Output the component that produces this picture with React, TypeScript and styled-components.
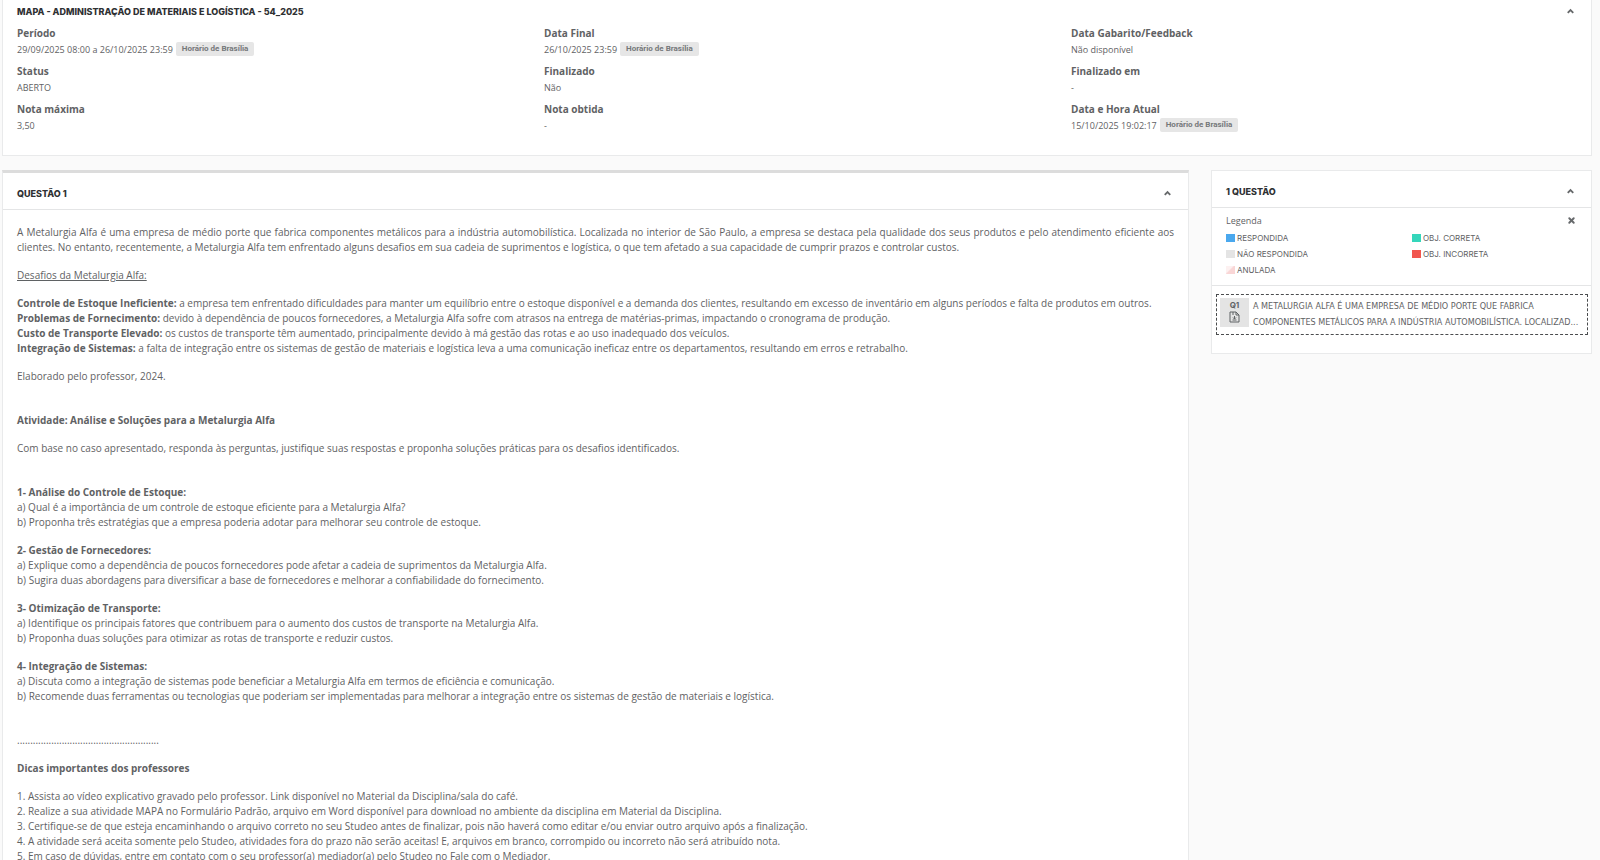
import React from 'react';
import styled, { createGlobalStyle } from 'styled-components';
import { ChevronUp, X } from 'lucide-react';

const GlobalStyle = createGlobalStyle`
  *, *::before, *::after { box-sizing: border-box; }
  body {
    margin: 0;
    background: #fafafa;
    color: #5f6264;
    font-family: 'Open Sans', 'Noto Sans', sans-serif;
    font-size: 10px;
    line-height: 15px;
  }
  h1, h2, p, dl, dd, ul { margin: 0; padding: 0; }
`;

const Page = styled.div`
  display: flex;
  flex-direction: column;
  gap: 14px;
  padding: 0 8px 0 2px;
`;

const Panel = styled.section<{ $accent?: boolean; $flushTop?: boolean }>`
  background: #fff;
  border: 1px solid #e9eaeb;
  border-top: ${p => (p.$flushTop ? '0' : p.$accent ? '3px solid #dcdcdc' : '1px solid #e9eaeb')};
`;

const PanelHeader = styled.header<{ $compact?: boolean }>`
  display: flex;
  align-items: center;
  justify-content: space-between;
  height: ${p => (p.$compact ? '23px' : '36px')};
  padding: ${p => (p.$compact ? '0 15px 0 14px' : '5px 15px 0 14px')};
`;

const Title = styled.h2`
  font: 800 9px/16px Inter, sans-serif;
  color: #2f3133;
`;

const IconButton = styled.button`
  display: flex;
  align-items: center;
  justify-content: center;
  width: 12px;
  height: 12px;
  padding: 0;
  border: 0;
  background: none;
  color: #66696b;
  cursor: pointer;
`;

const Details = styled.dl`
  display: grid;
  grid-template-columns: repeat(3, minmax(0, 1fr));
  row-gap: 6px;
  padding: 2px 7px 22px 0;
`;

const Detail = styled.div`
  padding-left: 14px;
`;

const DetailLabel = styled.dt`
  font-weight: 700;
  line-height: 16px;
`;

const DetailValue = styled.dd`
  display: flex;
  align-items: center;
  gap: 3px;
  height: 16px;
  font-size: 9px;
`;

const Badge = styled.span`
  padding: 0 6px;
  border-radius: 2px;
  background: #e6e6e6;
  color: #75787a;
  font: 700 8px/14px Roboto, sans-serif;
`;

const Columns = styled.main`
  display: grid;
  grid-template-columns: minmax(0, 1187fr) minmax(0, 381fr);
  gap: 22px;
  align-items: start;
`;

const Statement = styled.div`
  display: flex;
  flex-direction: column;
  gap: 13px;
  padding: 15px 14px;
  border-top: 1px solid #e4e5e6;
`;

const Block = styled.div<{ $section?: boolean }>`
  margin-top: ${p => (p.$section ? '16px' : '0')};
`;

const Paragraph = styled.p`
  text-align: justify;
`;

const LegendBox = styled.div`
  padding: 4px 14px 7px;
  border-top: 1px solid #e4e5e6;
  border-bottom: 1px solid #e4e5e6;
`;

const LegendHead = styled.div`
  display: flex;
  align-items: center;
  justify-content: space-between;
  height: 16px;
  margin-bottom: 2px;
  font-size: 9px;
`;

const LegendList = styled.ul`
  display: grid;
  grid-template-columns: 187fr 166fr;
  list-style: none;
  font: 400 8px/16px Inter, sans-serif;
`;

const LegendItem = styled.li`
  display: flex;
  align-items: center;
  gap: 2px;
`;

const Swatch = styled.span<{ $fill: string }>`
  width: 9px;
  height: 8px;
  background: ${p => p.$fill};
`;

const QuestionList = styled.nav`
  padding: 8px 3px 18px 4px;
`;

const QuestionLink = styled.a`
  display: flex;
  gap: 4px;
  padding: 3px 3px 4px;
  border: 1px dashed #4a4c4e;
  color: inherit;
  text-decoration: none;
`;

const QuestionTile = styled.span`
  display: flex;
  flex: none;
  flex-direction: column;
  align-items: center;
  width: 29px;
  height: 29px;
  padding-top: 1px;
  background: #e4e4e4;
  font: 700 8px/12px Inter, sans-serif;
`;

const QuestionText = styled.span`
  flex: 1;
  min-width: 0;
  font: 9px/16px 'DejaVu Sans Condensed', 'DejaVu Sans', sans-serif;
`;

const TextLine = styled.span`
  display: block;
  white-space: nowrap;
`;

const Collapse = ({ label }: { label: string }) => (
  <IconButton type="button" aria-label={label}>
    <ChevronUp size={11} strokeWidth={4} strokeLinecap="butt" strokeLinejoin="miter" />
  </IconButton>
);

const FileIcon = () => (
  <svg width="11" height="12" viewBox="0 0 11 12" fill="none" stroke="currentColor" aria-hidden="true">
    <path d="M1 1H7L10 4V11H1Z" />
    <path d="M4 1V4M7 1V4H10" />
    <path d="M5.5 5V8M4 6.5L5.5 8L7 6.5M3.5 9H7.5" />
  </svg>
);

const details: { label: string; value: string; zone?: boolean }[] = [
  { label: 'Período', value: '29/09/2025 08:00 a 26/10/2025 23:59', zone: true },
  { label: 'Data Final', value: '26/10/2025 23:59', zone: true },
  { label: 'Data Gabarito/Feedback', value: 'Não disponível' },
  { label: 'Status', value: 'ABERTO' },
  { label: 'Finalizado', value: 'Não' },
  { label: 'Finalizado em', value: '-' },
  { label: 'Nota máxima', value: '3,50' },
  { label: 'Nota obtida', value: '-' },
  { label: 'Data e Hora Atual', value: '15/10/2025 19:02:17', zone: true },
];

const challenges = [
  ['Controle de Estoque Ineficiente:', 'a empresa tem enfrentado dificuldades para manter um equilíbrio entre o estoque disponível e a demanda dos clientes, resultando em excesso de inventário em alguns períodos e falta de produtos em outros.'],
  ['Problemas de Fornecimento:', 'devido à dependência de poucos fornecedores, a Metalurgia Alfa sofre com atrasos na entrega de matérias-primas, impactando o cronograma de produção.'],
  ['Custo de Transporte Elevado:', 'os custos de transporte têm aumentado, principalmente devido à má gestão das rotas e ao uso inadequado dos veículos.'],
  ['Integração de Sistemas:', 'a falta de integração entre os sistemas de gestão de materiais e logística leva a uma comunicação ineficaz entre os departamentos, resultando em erros e retrabalho.'],
];

const tasks = [
  ['1- Análise do Controle de Estoque:', 'a) Qual é a importância de um controle de estoque eficiente para a Metalurgia Alfa?', 'b) Proponha três estratégias que a empresa poderia adotar para melhorar seu controle de estoque.'],
  ['2- Gestão de Fornecedores:', 'a) Explique como a dependência de poucos fornecedores pode afetar a cadeia de suprimentos da Metalurgia Alfa.', 'b) Sugira duas abordagens para diversificar a base de fornecedores e melhorar a confiabilidade do fornecimento.'],
  ['3- Otimização de Transporte:', 'a) Identifique os principais fatores que contribuem para o aumento dos custos de transporte na Metalurgia Alfa.', 'b) Proponha duas soluções para otimizar as rotas de transporte e reduzir custos.'],
  ['4- Integração de Sistemas:', 'a) Discuta como a integração de sistemas pode beneficiar a Metalurgia Alfa em termos de eficiência e comunicação.', 'b) Recomende duas ferramentas ou tecnologias que poderiam ser implementadas para melhorar a integração entre os sistemas de gestão de materiais e logística.'],
];

const tips = [
  '1. Assista ao vídeo explicativo gravado pelo professor. Link disponível no Material da Disciplina/sala do café.',
  '2. Realize a sua atividade MAPA no Formulário Padrão, arquivo em Word disponível para download no ambiente da disciplina em Material da Disciplina.',
  '3. Certifique-se de que esteja encaminhando o arquivo correto no seu Studeo antes de finalizar, pois não haverá como editar e/ou enviar outro arquivo após a finalização.',
  '4. A atividade será aceita somente pelo Studeo, atividades fora do prazo não serão aceitas! E, arquivos em branco, corrompido ou incorreto não será atribuído nota.',
  '5. Em caso de dúvidas, entre em contato com o seu professor(a) mediador(a) pelo Studeo no Fale com o Mediador.',
];

const legend = [
  { label: 'RESPONDIDA', fill: '#4aa8ee' },
  { label: 'OBJ. CORRETA', fill: '#35d6bb' },
  { label: 'NÃO RESPONDIDA', fill: '#e4e4e4' },
  { label: 'OBJ. INCORRETA', fill: '#f1564f' },
  { label: 'ANULADA', fill: 'linear-gradient(135deg, #fdf1f1 40%, #f9d6d6 50%)' },
];

export default function App() {
  return (
    <>
      <GlobalStyle />
      <Page>
        <Panel $flushTop>
          <PanelHeader $compact>
            <Title as="h1">MAPA - ADMINISTRAÇÃO DE MATERIAIS E LOGÍSTICA - 54_2025</Title>
            <Collapse label="Recolher detalhes" />
          </PanelHeader>
          <Details>
            {details.map(d => (
              <Detail key={d.label}>
                <DetailLabel>{d.label}</DetailLabel>
                <DetailValue>
                  {d.value}
                  {d.zone && <Badge>Horário de Brasília</Badge>}
                </DetailValue>
              </Detail>
            ))}
          </Details>
        </Panel>

        <Columns>
          <Panel $accent id="q1">
            <PanelHeader>
              <Title>QUESTÃO 1</Title>
              <Collapse label="Recolher questão" />
            </PanelHeader>
            <Statement>
              <Paragraph>
                A Metalurgia Alfa é uma empresa de médio porte que fabrica componentes metálicos para a indústria
                automobilística. Localizada no interior de São Paulo, a empresa se destaca pela qualidade dos seus
                produtos e pelo atendimento eficiente aos clientes. No entanto, recentemente, a Metalurgia Alfa tem
                enfrentado alguns desafios em sua cadeia de suprimentos e logística, o que tem afetado a sua capacidade
                de cumprir prazos e controlar custos.
              </Paragraph>
              <p><u>Desafios da Metalurgia Alfa:</u></p>
              <Block>
                {challenges.map(([name, text]) => (
                  <p key={name}><strong>{name}</strong> {text}</p>
                ))}
              </Block>
              <p>Elaborado pelo professor, 2024.</p>
              <Block $section>
                <strong>Atividade: Análise e Soluções para a Metalurgia Alfa</strong>
              </Block>
              <p>Com base no caso apresentado, responda às perguntas, justifique suas respostas e proponha soluções práticas para os desafios identificados.</p>
              {tasks.map(([name, ...items], i) => (
                <Block key={name} $section={i === 0}>
                  <strong>{name}</strong>
                  {items.map(item => <p key={item}>{item}</p>)}
                </Block>
              ))}
              <Block $section>{'.'.repeat(54)}</Block>
              <p><strong>Dicas importantes dos professores</strong></p>
              <Block>
                {tips.map(tip => <p key={tip}>{tip}</p>)}
              </Block>
            </Statement>
          </Panel>

          <Panel as="aside">
            <PanelHeader>
              <Title>1 QUESTÃO</Title>
              <Collapse label="Recolher lista de questões" />
            </PanelHeader>
            <LegendBox>
              <LegendHead>
                Legenda
                <IconButton type="button" aria-label="Fechar legenda">
                  <X size={9} strokeWidth={5} />
                </IconButton>
              </LegendHead>
              <LegendList>
                {legend.map(l => (
                  <LegendItem key={l.label}><Swatch $fill={l.fill} />{l.label}</LegendItem>
                ))}
              </LegendList>
            </LegendBox>
            <QuestionList>
              <QuestionLink href="#q1">
                <QuestionTile>Q1<FileIcon /></QuestionTile>
                <QuestionText>
                  <TextLine>A METALURGIA ALFA É UMA EMPRESA DE MÉDIO PORTE QUE FABRICA</TextLine>
                  <TextLine>COMPONENTES METÁLICOS PARA A INDÚSTRIA AUTOMOBILÍSTICA. LOCALIZAD...</TextLine>
                </QuestionText>
              </QuestionLink>
            </QuestionList>
          </Panel>
        </Columns>
      </Page>
    </>
  );
}
